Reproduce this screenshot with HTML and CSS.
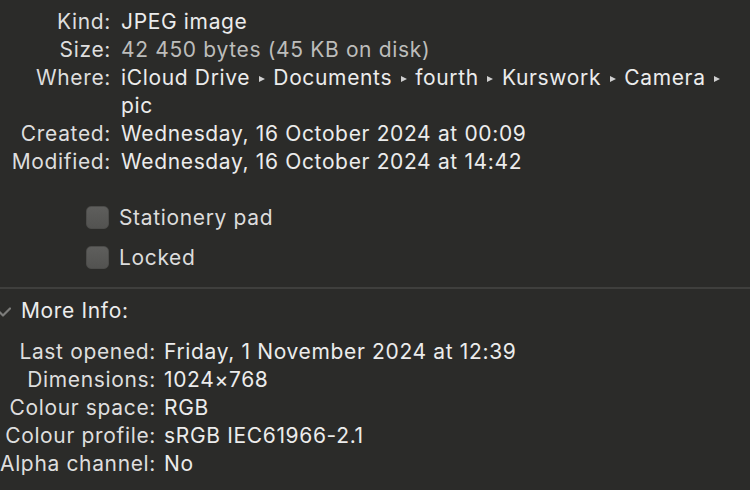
FILE: index.html
```html
<!DOCTYPE html>
<html>
<head>
<meta charset="utf-8">
<link rel="stylesheet" href="styles.css">
</head>
<body>
<div class="panel">
  <div class="grid general">
    <div class="lbl">Kind:</div><div class="val">JPEG image</div>
    <div class="lbl">Size:</div><div class="val dim">42 450 bytes (45 KB on disk)</div>
    <div class="lbl">Where:</div><div class="val">iCloud Drive <span class="arr"></span> Documents <span class="arr"></span> fourth <span class="arr"></span> Kurswork <span class="arr"></span> Camera <span class="arr"></span><br>pic</div>
    <div class="lbl">Created:</div><div class="val">Wednesday, 16 October 2024 at 00:09</div>
    <div class="lbl">Modified:</div><div class="val">Wednesday, 16 October 2024 at 14:42</div>
  </div>
  <div class="checks">
    <label class="check"><span class="box"></span><span>Stationery pad</span></label>
    <label class="check"><span class="box"></span><span>Locked</span></label>
  </div>
  <div class="sep"></div>
  <div class="section-head">
    <svg class="chev" width="16" height="10" viewBox="0 0 16 10"><path d="M1 1.5 L8 8.5 L15 1.5" fill="none" stroke="#7c7c7a" stroke-width="2.2" stroke-linecap="round" stroke-linejoin="round"/></svg>
    <span>More Info:</span>
  </div>
  <div class="grid more">
    <div class="lbl">Last opened:</div><div class="val">Friday, 1 November 2024 at 12:39</div>
    <div class="lbl">Dimensions:</div><div class="val">1024×768</div>
    <div class="lbl">Colour space:</div><div class="val">RGB</div>
    <div class="lbl">Colour profile:</div><div class="val">sRGB IEC61966-2.1</div>
    <div class="lbl">Alpha channel:</div><div class="val">No</div>
  </div>
</div>
</body>
</html>
```
FILE: styles.css
```css
html, body {
  margin: 0;
  padding: 0;
  background: #2b2b29;
}
body {
  width: 750px;
  height: 490px;
  overflow: hidden;
  font-family: Inter, "Liberation Sans", sans-serif;
  font-size: 21px;
  letter-spacing: 0.65px;
  color: #e6e6e6;
}
.panel {
  padding-top: 8px;
}
.grid {
  display: grid;
  column-gap: 10px;
  line-height: 28px;
}
.general {
  grid-template-columns: 111px 1fr;
}
.more {
  grid-template-columns: 156px 1fr;
  column-gap: 8px;
  margin-top: 13px;
}
.lbl {
  text-align: right;
  color: #dedede;
  white-space: nowrap;
}
.val {
  color: #ececec;
  white-space: nowrap;
}
.val.dim {
  color: #bdbdbb;
}
.arr {
  display: inline-block;
  width: 0;
  height: 0;
  border-top: 3.5px solid transparent;
  border-bottom: 3.5px solid transparent;
  border-left: 6px solid #cfcfcf;
  vertical-align: 3px;
  margin: 0 2px;
}
.checks {
  display: flex;
  flex-direction: column;
  gap: 17px;
  padding-left: 86px;
  margin-top: 30px;
}
.check {
  display: flex;
  align-items: center;
  gap: 10px;
  height: 23px;
  color: #dcdcdc;
}
.box {
  width: 23px;
  height: 23px;
  box-sizing: border-box;
  border-radius: 5px;
  background: linear-gradient(#5e5e5c, #535351);
  border: 1px solid #4c4c4a;
}
.sep {
  height: 2px;
  background: #3f3f3d;
  margin-top: 18px;
}
.section-head {
  display: flex;
  align-items: center;
  gap: 10px;
  margin-top: 8px;
  line-height: 28px;
  color: #ececec;
}
.chev {
  margin-left: -5px;
  margin-top: 2px;
}
```
